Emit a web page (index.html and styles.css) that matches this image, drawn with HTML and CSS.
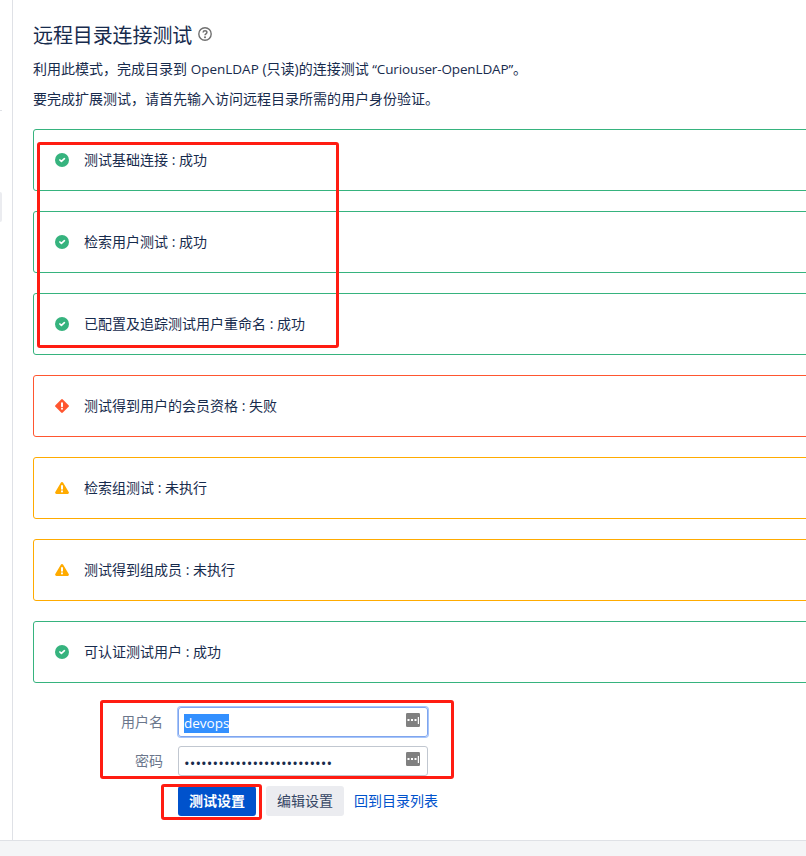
FILE: index.html
```html
<!DOCTYPE html>
<html lang="zh-CN">
<head>
<meta charset="utf-8">
<title>远程目录连接测试</title>
<link rel="stylesheet" href="styles.css">
</head>
<body>
<svg width="0" height="0" class="defs" aria-hidden="true">
  <symbol id="ok" viewBox="0 0 14 14"><circle cx="7" cy="7" r="7" fill="#36b37e"/><path d="M4.9 7 6.4 8.4 9.4 5.7" fill="none" stroke="#fff" stroke-width="1.7" stroke-linecap="round" stroke-linejoin="round"/></symbol>
  <symbol id="fail" viewBox="0 0 14 14"><path d="M7 1.3 12.7 7 7 12.7 1.3 7Z" fill="#ff5630" stroke="#ff5630" stroke-width="2.4" stroke-linejoin="round"/><path d="M7 4.2V7.2M7 9.7V9.8" stroke="#fff" stroke-width="2" stroke-linecap="round"/></symbol>
  <symbol id="warn" viewBox="0 0 14 14"><path d="M7 2.4 12.5 11.6H1.5Z" fill="#ffab00" stroke="#ffab00" stroke-width="2.8" stroke-linejoin="round"/><path d="M7 5V7.8M7 10.3V10.4" stroke="#fff" stroke-width="2" stroke-linecap="round"/></symbol>
  <symbol id="key" viewBox="0 0 14 14"><rect width="14" height="14" rx="1.2" fill="#808080"/><path d="M1.5 6h2v2h-2zM5 6h2v2H5zM8.5 6h2v2h-2zM11.8 4h1.2v7h-1.2z" fill="#fff"/></symbol>
</svg>
<div class="page">
  <aside class="sidebar"><div class="rule"></div><div class="current"></div></aside>
  <main class="content">
    <h1>远程目录连接测试<svg class="help" viewBox="0 0 14 14"><circle cx="7" cy="7" r="6.2" fill="none" stroke="#707070" stroke-width="1.4"/><path d="M5.1 5.5C5.2 3.1 9 3.2 8.9 5.5 8.8 6.8 7 6.8 7 8.2" fill="none" stroke="#707070" stroke-width="1.5"/><circle cx="7" cy="10.2" r="1" fill="#707070"/></svg></h1>
    <p>利用此模式，完成目录到 <span class="latin">OpenLDAP</span> (只读)的连接测试 <span class="latin name">“Curiouser-OpenLDAP”</span>。</p>
    <p>要完成扩展测试，请首先输入访问远程目录所需的用户身份验证。</p>
    <div class="messages">
      <div class="message success"><svg><use href="#ok"/></svg><span>测试基础连接 : 成功</span></div>
      <div class="message success"><svg><use href="#ok"/></svg><span>检索用户测试 : 成功</span></div>
      <div class="message success"><svg><use href="#ok"/></svg><span>已配置及追踪测试用户重命名 : 成功</span></div>
      <div class="message error"><svg><use href="#fail"/></svg><span>测试得到用户的会员资格 : 失败</span></div>
      <div class="message warning"><svg><use href="#warn"/></svg><span>检索组测试 : 未执行</span></div>
      <div class="message warning"><svg><use href="#warn"/></svg><span>测试得到组成员 : 未执行</span></div>
      <div class="message success"><svg><use href="#ok"/></svg><span>可认证测试用户 : 成功</span></div>
    </div>
    <form>
      <div class="row"><label>用户名</label><div class="field focus"><span class="selected">devops</span><svg><use href="#key"/></svg></div></div>
      <div class="row"><label>密码</label><div class="field"><span class="secret">••••••••••••••••••••••••••</span><svg><use href="#key"/></svg></div></div>
      <div class="actions"><button type="button" class="primary">测试设置</button><button type="button">编辑设置</button><a>回到目录列表</a></div>
    </form>
  </main>
</div>
<footer></footer>
<div class="mark mark-results"></div>
<div class="mark mark-login"></div>
<div class="mark mark-submit"></div>
</body>
</html>
```
FILE: styles.css
```css
* { box-sizing: border-box; }
body {
  margin: 0;
  height: 856px;
  display: flex;
  flex-direction: column;
  position: relative;
  overflow: hidden;
  background: #fff;
  color: #172b4d;
  font: 14px/20px "Open Sans", "Noto Sans CJK SC", sans-serif;
}
.defs { position: absolute; }
.page { display: flex; height: 840px; }
.sidebar { width: 13px; flex: none; border-right: 1px solid #dfe1e6; padding-top: 110px; }
.rule { width: 2px; height: 1px; background: #dfe1e6; }
.current { width: 2px; height: 30px; margin-top: 81px; background: #ebecf0; border-radius: 0 3px 3px 0; }
.content { flex: 1; min-width: 0; padding: 22px 0 0 20px; white-space: nowrap; }
h1 { display: flex; align-items: center; margin: 0; height: 27px; font-size: 20px; line-height: 27px; font-weight: 400; letter-spacing: -.1px; }
.help { width: 14px; height: 14px; margin: -3px 0 0 6px; }
p { margin: 10px 0 0; }
.latin { font-size: 13.5px; }
.name { letter-spacing: -.14px; }
.messages { display: flex; flex-direction: column; gap: 20px; margin: 20px -10px 0 0; }
.message { display: flex; align-items: flex-start; height: 62px; padding: 20px 21px; border: 1px solid; border-radius: 3px; }
.message svg { width: 14px; height: 14px; margin: 3px 15px 0 0; }
.message span { color: #172b4d; }
.success { border-color: #36b37e; }
.error { border-color: #ff5630; }
.warning { border-color: #ffab00; }
form { margin-top: 24px; }
.row { display: flex; align-items: center; margin-bottom: 9px; }
label { width: 130px; margin-right: 15px; text-align: right; color: #6b778c; }
.field { display: flex; align-items: center; justify-content: space-between; width: 250px; height: 30px; padding: 0 7px 0 5px; border: 1px solid #c1c7d0; border-radius: 3px; }
.field svg { width: 14px; height: 14px; margin-top: -4px; }
.focus { border-color: #7fa5ee; box-shadow: 0 0 0 1px #a6c5fa; }
.selected { height: 19px; line-height: 19px; background: #3390ff; color: #fff; font-size: 13.5px; margin-top: 2px; }
.secret { font-size: 15px; letter-spacing: .06px; margin-top: 3px; }
.actions { display: flex; align-items: center; gap: 10px; margin: 10px 0 0 145px; }
button { width: 78px; height: 30px; padding: 0; border: 0; border-radius: 3px; background: #ebecf0; color: #344563; font: inherit; }
.primary { background: #0052cc; color: #fff; font-weight: 700; }
a { color: #0052cc; }
footer { height: 16px; background: #f4f5f7; border-top: 1px solid #dfe1e6; }
.mark { position: absolute; border: 3px solid #ff1c12; border-radius: 3px; }
.mark-results { left: 37px; top: 142px; width: 302px; height: 206px; }
.mark-login { left: 100px; top: 700px; width: 354px; height: 79px; }
.mark-submit { left: 161px; top: 784px; width: 101px; height: 36px; }
```
